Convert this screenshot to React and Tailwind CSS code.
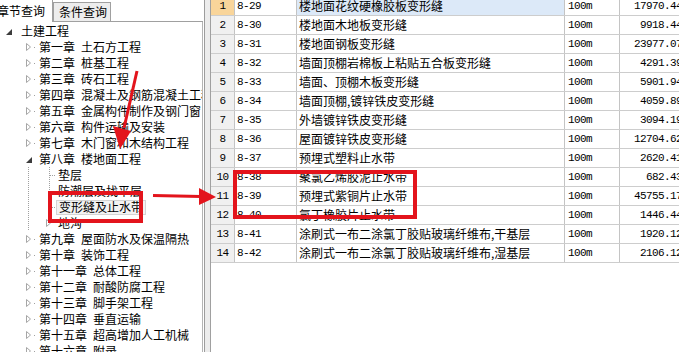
import React from "react";

const chaptersTop = [
  ["第一章", "土石方工程"],
  ["第二章", "桩基工程"],
  ["第三章", "砖石工程"],
  ["第四章", "混凝土及钢筋混凝土工程"],
  ["第五章", "金属构件制作及钢门窗"],
  ["第六章", "构件运输及安装"],
  ["第七章", "木门窗和木结构工程"],
];

const chaptersBottom = [
  ["第九章", "屋面防水及保温隔热"],
  ["第十章", "装饰工程"],
  ["第十一章", "总体工程"],
  ["第十二章", "耐酸防腐工程"],
  ["第十三章", "脚手架工程"],
  ["第十四章", "垂直运输"],
  ["第十五章", "超高增加人工机械"],
  ["第十六章", "附录"],
];

const rows = [
  ["8-29", "楼地面花纹硬橡胶板变形缝", "17970.44"],
  ["8-30", "楼地面木地板变形缝", "9918.44"],
  ["8-31", "楼地面钢板变形缝", "23977.07"],
  ["8-32", "墙面顶棚岩棉板上粘贴五合板变形缝", "4291.39"],
  ["8-33", "墙面、顶棚木板变形缝", "5901.94"],
  ["8-34", "墙面顶棚,镀锌铁皮变形缝", "4059.89"],
  ["8-35", "外墙镀锌铁皮变形缝", "3094.19"],
  ["8-36", "屋面镀锌铁皮变形缝", "12704.62"],
  ["8-37", "预埋式塑料止水带", "2620.41"],
  ["8-38", "聚氯乙烯胶泥止水带", "682.43"],
  ["8-39", "预埋式紫铜片止水带", "45755.17"],
  ["8-40", "氯丁橡胶片止水带", "1446.44"],
  ["8-41", "涂刷式一布二涂氯丁胶贴玻璃纤维布,干基层", "1920.12"],
  ["8-42", "涂刷式一布二涂氯丁胶贴玻璃纤维布,湿基层", "2106.12"],
];

const mono = "font-['Liberation_Mono',monospace] text-[11px] tracking-[-0.6px]";

function Expanded({ x, w }) {
  return (
    <svg width={w} height="16" className="shrink-0">
      <polygon points={`${x + 6},6 ${x + 6},12 ${x},12`} fill="#3c3c3c" />
    </svg>
  );
}

function ChapterRow({ no, name }) {
  return (
    <div className="flex h-[16px] items-center whitespace-nowrap">
      <svg width="39" height="16" className="shrink-0">
        <polygon points="26.5,4.5 30.5,8 26.5,11.5" fill="#fff" stroke="#a6a6a6" />
        <rect x="34" y="8" width="1" height="1" fill="#a0a0a0" />
      </svg>
      <span>{no}</span>
      <span className="ml-[6px]">{name}</span>
    </div>
  );
}

function ChildRow({ label, last, selected }) {
  return (
    <div className="flex h-[16px] items-center whitespace-nowrap">
      <svg width="56" height="16" className="shrink-0">
        <line x1="28.5" y1="0" x2="28.5" y2="16" stroke="#a0a0a0" strokeDasharray="1 1" />
        {last ? (
          <>
            <line x1="49.5" y1="0" x2="49.5" y2="4" stroke="#a0a0a0" strokeDasharray="1 1" />
            <polygon points="46.5,4.5 50.5,8 46.5,11.5" fill="#fff" stroke="#a6a6a6" />
          </>
        ) : (
          <>
            <line x1="49.5" y1="0" x2="49.5" y2="16" stroke="#a0a0a0" strokeDasharray="1 1" />
            <line x1="50" y1="8.5" x2="56" y2="8.5" stroke="#a0a0a0" strokeDasharray="1 1" />
          </>
        )}
      </svg>
      {selected ? (
        <span className="h-[15px] flex items-center px-[2px] bg-[#f2f2f2] border border-[#d4d4d4]">{label}</span>
      ) : (
        <span className="ml-[2px]">{label}</span>
      )}
    </div>
  );
}

export default function App() {
  return (
    <div className="relative flex w-[679px] h-[352px] overflow-hidden bg-white text-black text-[12px] font-['Noto_Sans_CJK_SC',sans-serif]">
      {/* left: chapter tree */}
      <div className="flex flex-col w-[205px] shrink-0 pr-[1px] border-r border-[#9c9c9c]">
        <div className="flex h-[22px] shrink-0">
          <div className="w-[53px] h-[22px] border-r border-[#a0a0a0] overflow-hidden flex items-center">
            <span className="-ml-[3px] whitespace-nowrap">章节查询</span>
          </div>
          <div className="mt-[2px] w-[58px] h-[20px] border border-[#a0a0a0] bg-[#ededed] flex items-center pl-[5px] whitespace-nowrap">
            条件查询
          </div>
          <div className="flex-1 border-b border-[#a0a0a0]" />
        </div>
        <div className="flex-1 flex flex-col pt-[1px] overflow-hidden border-r border-[#b4b4b4]">
          <div className="flex h-[16px] items-center">
            <Expanded x={6} w={21} />
            <span>土建工程</span>
          </div>
          {chaptersTop.map(([no, name]) => (
            <ChapterRow key={no} no={no} name={name} />
          ))}
          <div className="flex h-[16px] items-center whitespace-nowrap">
            <Expanded x={26} w={39} />
            <span>第八章</span>
            <span className="ml-[6px]">楼地面工程</span>
          </div>
          <ChildRow label="垫层" />
          <ChildRow label="防潮层及找平层" />
          <ChildRow label="变形缝及止水带" selected />
          <ChildRow label="地沟" last />
          {chaptersBottom.map(([no, name]) => (
            <ChapterRow key={no} no={no} name={name} />
          ))}
        </div>
      </div>

      {/* splitter */}
      <div className="w-[6px] shrink-0 bg-[#ececec] border-r border-[#a0a0a0]" />

      {/* right: quota table */}
      <div className="flex-1 overflow-hidden">
        <div className="-mt-[3px] w-[474px]">
          {rows.map(([code, name, price], i) => (
            <div key={code} className="flex h-[19px] border-b border-[#cdcdcd] whitespace-nowrap">
              <div
                className={`w-[24px] shrink-0 flex items-center justify-center border-r border-[#c4c4c4] ${mono} ${
                  i === 0 ? "bg-[#f9d59a]" : "bg-[#f0f0f0]"
                }`}
              >
                {i + 1}
              </div>
              <div className={`w-[62px] shrink-0 flex items-center pl-[2px] border-r border-[#c4c4c4] ${mono}`}>{code}</div>
              <div
                className={`w-[268px] shrink-0 flex items-center pl-[2px] border-r border-[#c4c4c4] ${
                  i === 0 ? "bg-[#dce9f8]" : ""
                }`}
              >
                {name}
              </div>
              <div className={`w-[55px] shrink-0 flex items-center pl-[3px] border-r border-[#c4c4c4] ${mono}`}>100m</div>
              <div className={`w-[65px] shrink-0 flex items-center justify-end pr-[3px] ${mono}`}>{price}</div>
            </div>
          ))}
        </div>
      </div>

      {/* red annotations */}
      <svg className="absolute inset-0 pointer-events-none" width="679" height="352">
        <rect x="50" y="193" width="91" height="28" fill="none" stroke="#e3141c" strokeWidth="4" />
        <rect x="235" y="172" width="180" height="45" fill="none" stroke="#e3141c" strokeWidth="4" />
        <line x1="137" y1="71" x2="124" y2="128" stroke="#e3141c" strokeWidth="3" />
        <polygon points="113,126 131,131 120,149" fill="#e3141c" />
        <line x1="153" y1="195.5" x2="201" y2="196.5" stroke="#e3141c" strokeWidth="3" />
        <polygon points="199,188 216,197 199,205" fill="#e3141c" />
      </svg>
    </div>
  );
}
